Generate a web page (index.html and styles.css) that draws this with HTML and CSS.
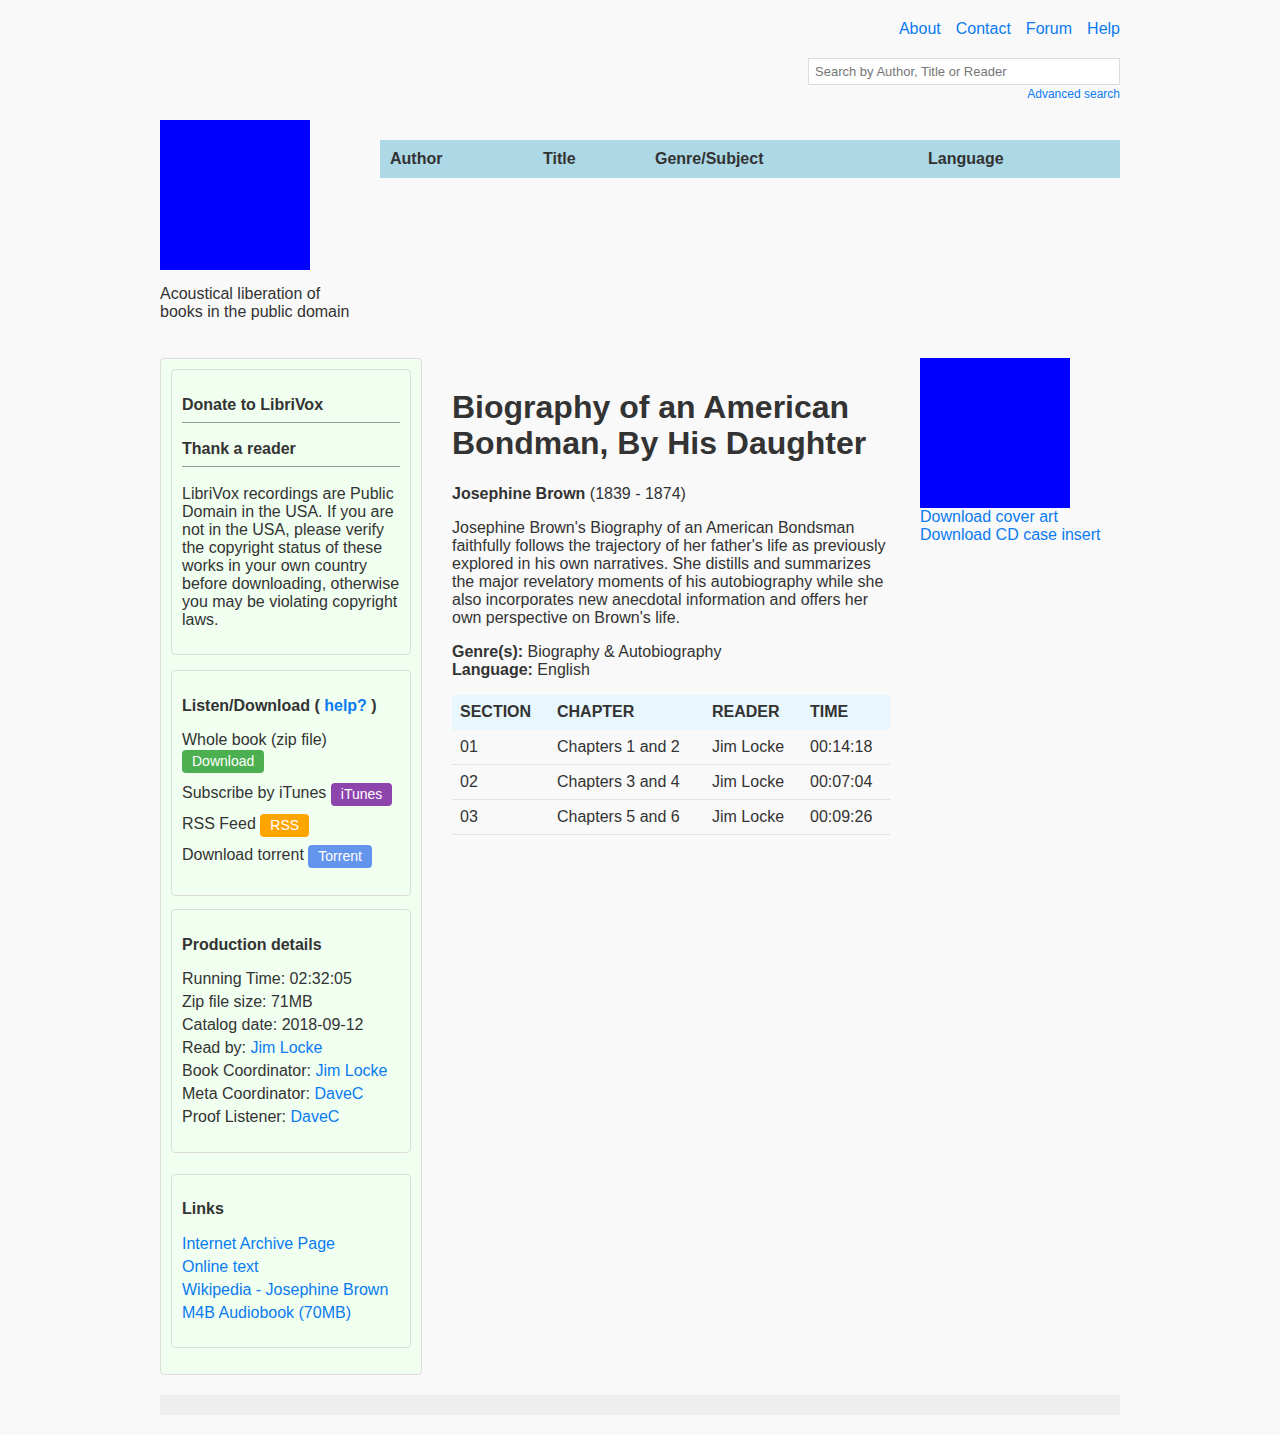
FILE: index.html
```html
<!DOCTYPE html>
<html lang="en">
<head>
<meta charset="utf-8">
<title>Biography of an American Bondman, By His Daughter - LibriVox</title>
<link rel="stylesheet" href="styles.css">
</head>
<body>
<div class="page">
  <header class="top">
    <nav class="top-nav">
      <a href="#">About</a>
      <a href="#">Contact</a>
      <a href="#">Forum</a>
      <a href="#">Help</a>
    </nav>
    <div class="search">
      <input class="search-input" type="text" placeholder="Search by Author, Title or Reader">
      <a class="adv" href="#">Advanced search</a>
    </div>
  </header>

  <div class="brand-row">
    <div class="brand">
      <div class="logo"></div>
      <p class="tagline">Acoustical liberation of books in the public domain</p>
    </div>
    <div class="browse">
      <span class="b-author">Author</span>
      <span class="b-title">Title</span>
      <span class="b-genre">Genre/Subject</span>
      <span class="b-lang">Language</span>
    </div>
  </div>

  <div class="main">
    <aside class="sidebar">
      <div class="box box-donate">
        <h4 class="box-h first">Donate to LibriVox</h4>
        <hr class="rule">
        <h4 class="box-h second">Thank a reader</h4>
        <hr class="rule">
        <p class="notice">LibriVox recordings are Public Domain in the USA. If you are not in the USA, please verify the copyright status of these works in your own country before downloading, otherwise you may be violating copyright laws.</p>
      </div>

      <div class="box box-listen">
        <h4 class="box-h first">Listen/Download ( <a href="#">help?</a> )</h4>
        <div class="dl-row whole">Whole book (zip file)<br><a class="btn btn-green" href="#">Download</a></div>
        <div class="dl-row after-whole">Subscribe by iTunes <a class="btn btn-purple" href="#">iTunes</a></div>
        <div class="dl-row">RSS Feed <a class="btn btn-orange" href="#">RSS</a></div>
        <div class="dl-row">Download torrent <a class="btn btn-blue" href="#">Torrent</a></div>
      </div>

      <div class="box box-prod">
        <h4 class="box-h first">Production details</h4>
        <p class="line">Running Time: 02:32:05</p>
        <p class="line">Zip file size: 71MB</p>
        <p class="line">Catalog date: 2018-09-12</p>
        <p class="line">Read by: <a href="#">Jim Locke</a></p>
        <p class="line">Book Coordinator: <a href="#">Jim Locke</a></p>
        <p class="line">Meta Coordinator: <a href="#">DaveC</a></p>
        <p class="line">Proof Listener: <a href="#">DaveC</a></p>
      </div>

      <div class="box box-links">
        <h4 class="box-h first">Links</h4>
        <p class="line"><a href="#">Internet Archive Page</a></p>
        <p class="line"><a href="#">Online text</a></p>
        <p class="line"><a href="#">Wikipedia - Josephine Brown</a></p>
        <p class="line"><a href="#">M4B Audiobook (70MB)</a></p>
      </div>
    </aside>

    <section class="content">
      <h1 class="title">Biography of an American Bondman, By His Daughter</h1>
      <p class="author"><b>Josephine Brown</b> (1839 - 1874)</p>
      <p class="desc">Josephine Brown's Biography of an American Bondsman faithfully follows the trajectory of her father's life as previously explored in his own narratives. She distills and summarizes the major revelatory moments of his autobiography while she also incorporates new anecdotal information and offers her own perspective on Brown's life.</p>
      <p class="meta"><b>Genre(s):</b> Biography &amp; Autobiography<br><b>Language:</b> English</p>
      <table class="chapters">
        <thead>
          <tr><th class="c1">SECTION</th><th class="c2">CHAPTER</th><th class="c3">READER</th><th class="c4">TIME</th></tr>
        </thead>
        <tbody>
          <tr><td>01</td><td>Chapters 1 and 2</td><td>Jim Locke</td><td>00:14:18</td></tr>
          <tr><td>02</td><td>Chapters 3 and 4</td><td>Jim Locke</td><td>00:07:04</td></tr>
          <tr><td>03</td><td>Chapters 5 and 6</td><td>Jim Locke</td><td>00:09:26</td></tr>
        </tbody>
      </table>
    </section>

    <aside class="cover-col">
      <div class="cover"></div>
      <a href="#">Download cover art</a>
      <a href="#">Download CD case insert</a>
    </aside>
  </div>

  <footer class="footer"></footer>
</div>
</body>
</html>
```

FILE: styles.css
```css
* { box-sizing: border-box; }

html, body {
  margin: 0;
  padding: 0;
  background: #f9f9f9;
}

body {
  font-family: "Liberation Sans", Arial, Helvetica, sans-serif;
  font-size: 16px;
  line-height: 18px;
  color: #333;
}

a {
  color: #0a7bf2;
  text-decoration: none;
}

.page {
  width: 960px;
  margin: 0 auto;
  padding-top: 20px;
  padding-bottom: 20px;
}

/* top */
.top {
  display: flex;
  flex-direction: column;
  align-items: flex-end;
}

.top-nav {
  display: flex;
  gap: 15px;
}

.search {
  margin-top: 20px;
  display: flex;
  flex-direction: column;
  align-items: flex-end;
}

.search-input {
  width: 312px;
  height: 27px;
  border: 1px solid #ddd;
  background: #fff;
  font-family: "Liberation Sans", Arial, sans-serif;
  font-size: 13px;
  padding: 0 6px;
  color: #333;
  outline: none;
}

.search-input::placeholder {
  color: #767676;
}

.adv {
  font-size: 12px;
  line-height: 14px;
  margin-top: 2px;
}

/* brand row */
.brand-row {
  display: flex;
  margin-top: 19px;
}

.brand {
  width: 200px;
  flex: 0 0 200px;
}

.logo {
  width: 150px;
  height: 150px;
  background: #0000ff;
}

.tagline {
  margin: 15px 0 0;
}

.browse {
  margin-left: 20px;
  margin-top: 20px;
  flex: 1;
  height: 38px;
  background: #add8e6;
  display: grid;
  grid-template-columns: 153px 112px 273px auto;
  align-items: center;
  padding-left: 10px;
  font-weight: bold;
}

/* main */
.main {
  display: grid;
  grid-template-columns: 262px 438px 200px;
  column-gap: 30px;
  margin-top: 37px;
  align-items: start;
}

.sidebar {
  background: #f0fff0;
  border: 1px solid #ddd;
  border-radius: 4px;
  padding: 10px 10px 26px;
}

.box {
  background: #f0fff0;
  border: 1px solid #ddd;
  border-radius: 4px;
  padding: 0 10px 10px;
}

.box-listen { margin-top: 15px; }
.box-prod { margin-top: 13px; }
.box-links { margin-top: 21px; }

.box-h {
  margin: 0;
  font-size: 16px;
  line-height: 18px;
  font-weight: bold;
}

.box-h.first { margin-top: 26px; }
.box-h.second { margin-top: 17px; }
.box-links .box-h.first { margin-top: 25px; }

.rule {
  margin: 8px 0 0;
  border: 0;
  border-top: 1px solid #999;
  height: 0;
}

.notice {
  margin: 18px 0 15px;
}

.dl-row {
  margin-top: 7px;
  line-height: 18px;
}

.dl-row.whole { margin-top: 16px; }
.dl-row.after-whole { margin-top: 9px; }

.box-listen { padding-bottom: 27px; }

.btn {
  display: inline-block;
  color: #fff;
  font-size: 14px;
  line-height: 17px;
  padding: 3px 10px;
  border-radius: 4px;
  vertical-align: middle;
  margin-top: 1px;
}

.btn-green { background: #4caf50; }
.btn-purple { background: #8e44ad; }
.btn-orange { background: #ffa500; }
.btn-blue { background: #6495ed; }

.line {
  margin: 5px 0 0;
}

.box-prod .box-h + .line { margin-top: 16px; }
.box-links .box-h + .line { margin-top: 17px; }

.box-prod { padding-bottom: 26px; }
.box-links { padding-bottom: 25px; }

/* content */
.content {
  padding-top: 10px;
}

.title {
  font-size: 32px;
  line-height: 36px;
  font-weight: bold;
  margin: 21px 0 24px;
}

.author { margin: 0 0 16px; }
.desc { margin: 0 0 16px; }
.meta { margin: 0 0 16px; }

.chapters {
  width: 100%;
  border-collapse: collapse;
  table-layout: fixed;
}

.chapters th {
  background: #e8f6fd;
  text-align: left;
  font-weight: bold;
  padding: 8px;
  line-height: 18px;
}

.chapters td {
  padding: 8px;
  line-height: 18px;
  border-bottom: 1px solid #e3e3e3;
}

.chapters thead tr { border-bottom: 1px solid #e8f6fd; }

.c1 { width: 97px; }
.c2 { width: 155px; }
.c3 { width: 98px; }
.c4 { width: 88px; }

/* cover column */
.cover-col {
  display: flex;
  flex-direction: column;
}

.cover {
  width: 150px;
  height: 150px;
  background: #0000ff;
}

/* footer */
.footer {
  margin-top: 20px;
  height: 20px;
  background: #eee;
}
```
